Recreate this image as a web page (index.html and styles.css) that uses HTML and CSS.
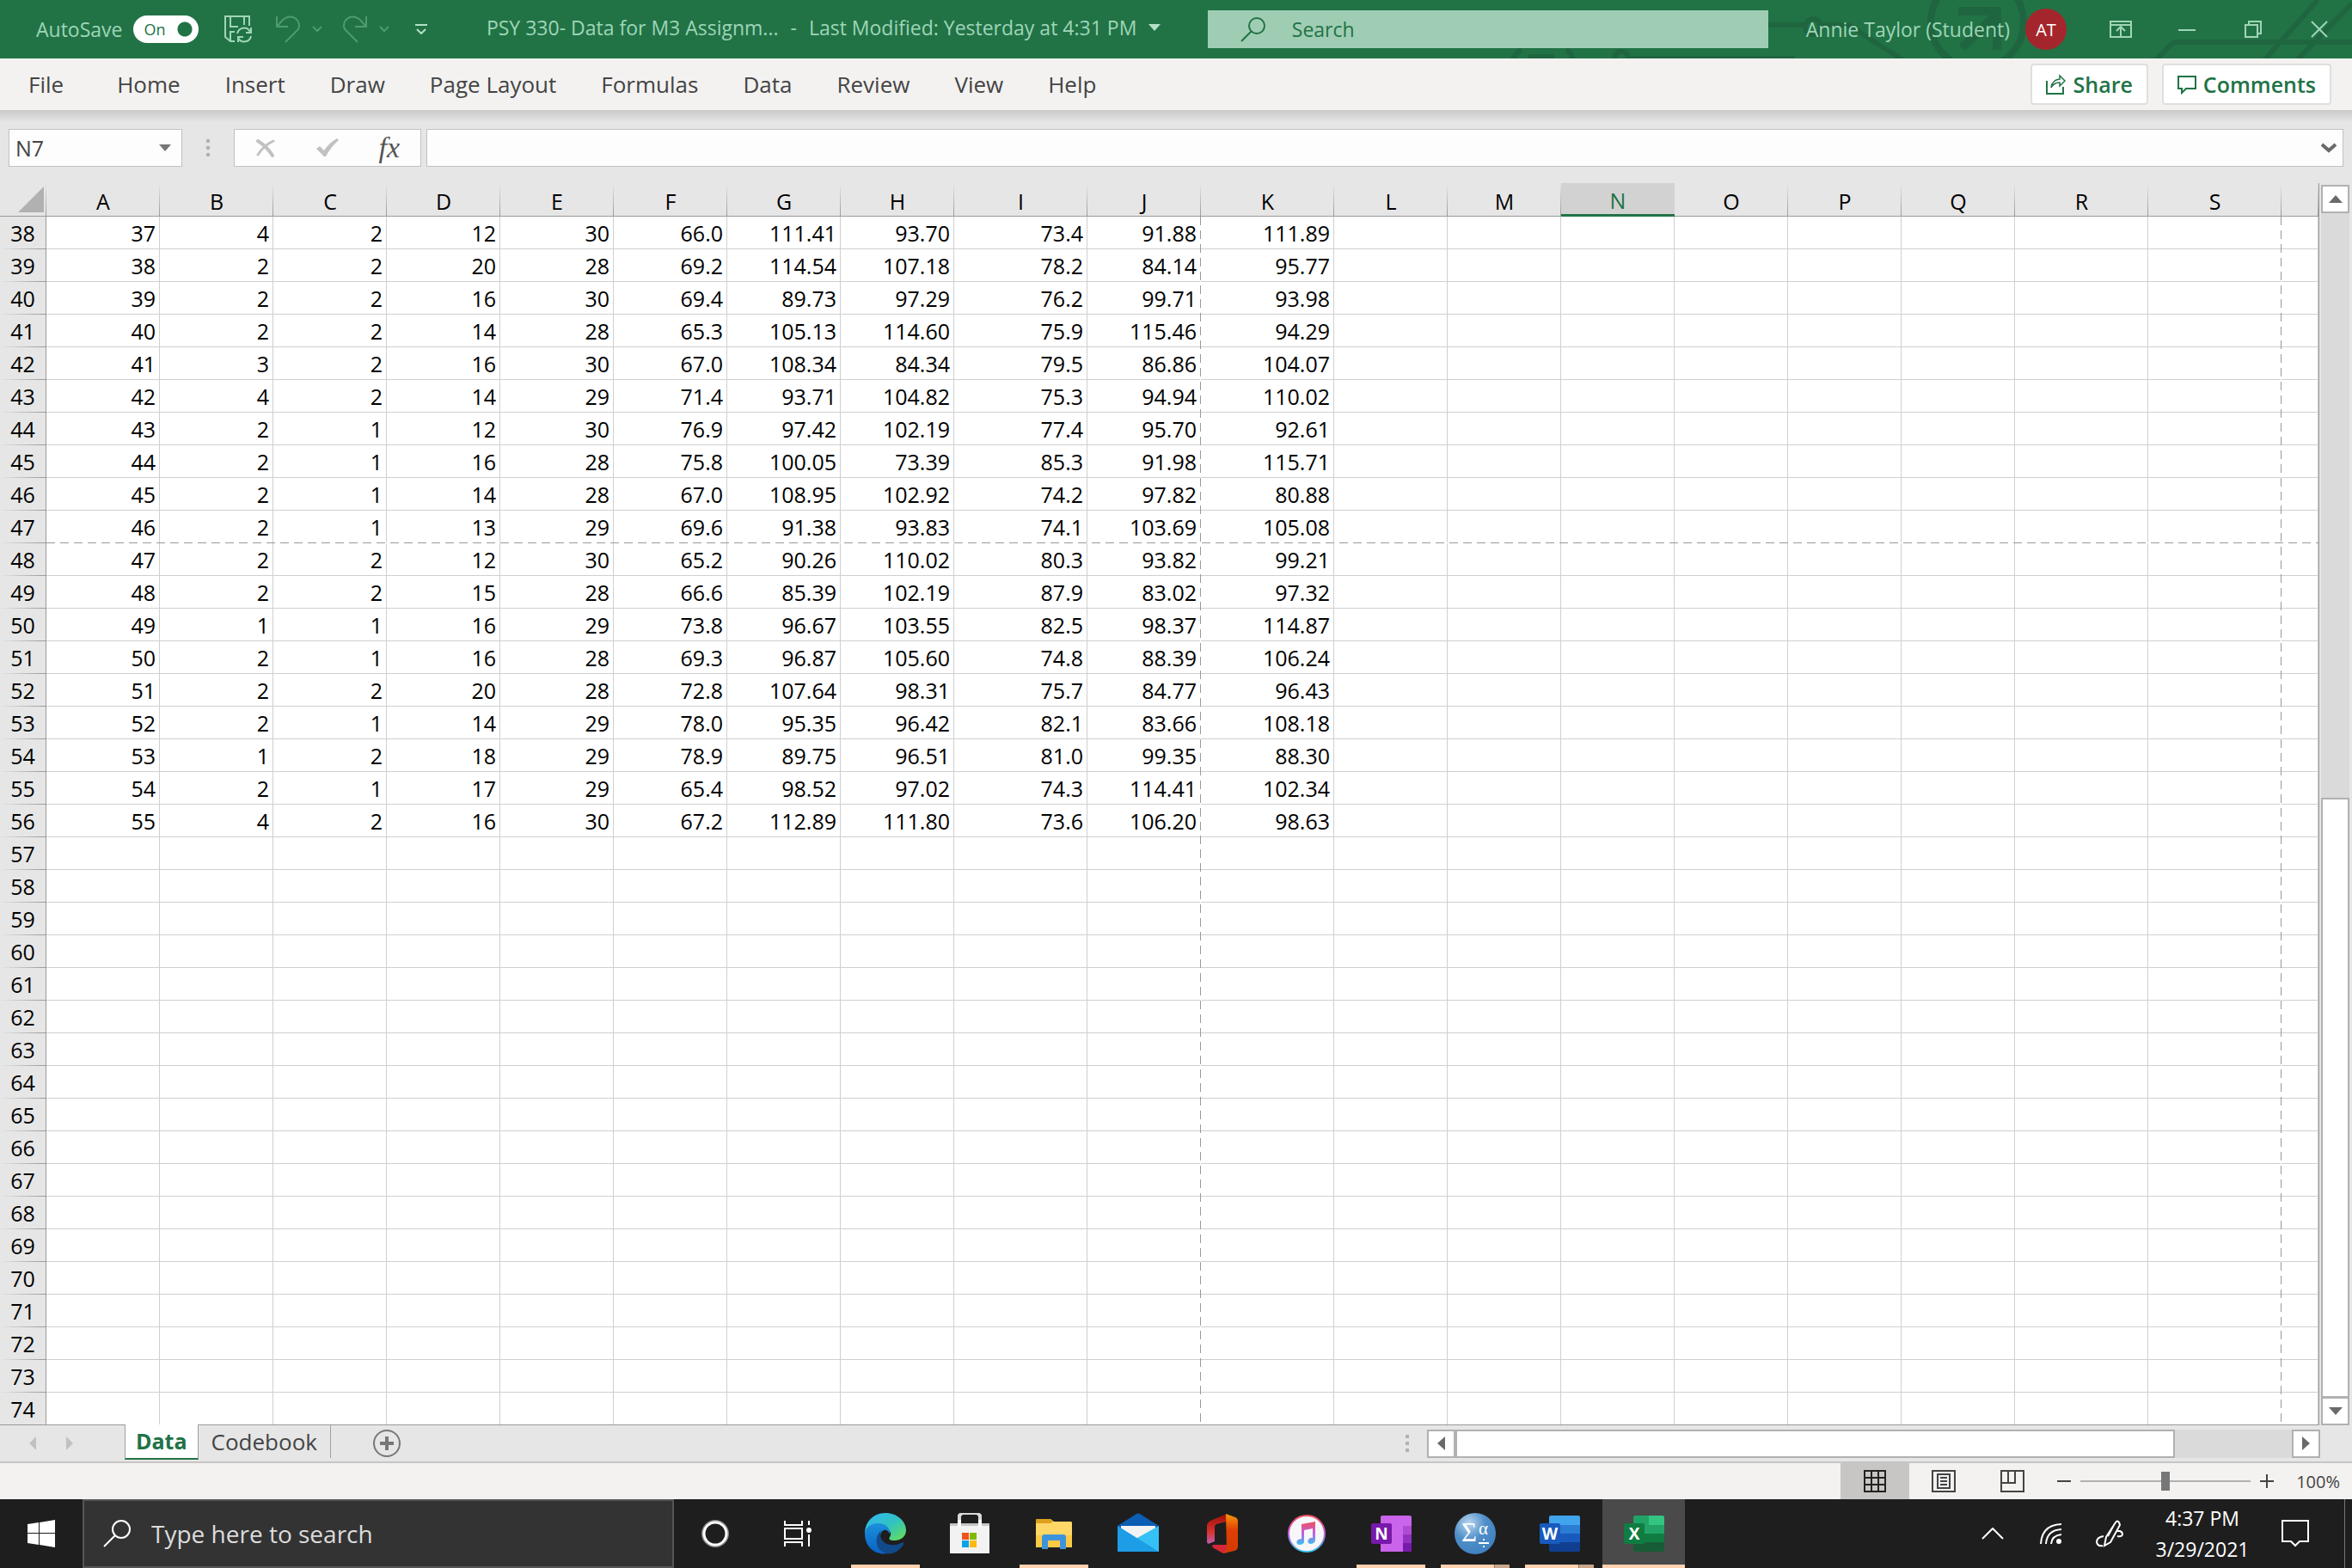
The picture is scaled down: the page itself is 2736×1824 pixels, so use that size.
FILE: index.html
```html
<!DOCTYPE html>
<html lang="en">
<head>
    <meta charset="UTF-8">
    <meta name="viewport" content="width=device-width, initial-scale=1.0">
    <title>PSY 330- Data for M3 Assignment - Excel</title>
    <link rel="stylesheet" href="styles.css">
</head>
<body>
    <header class="titlebar">
        <svg class="titlebar-art" width="1000" height="68" viewBox="0 0 1000 68" fill="none" stroke="#1f6640" stroke-width="6">
            <circle cx="564" cy="26" r="54" stroke-width="8"/>
            <path d="M542 13H587V58M587 16L546 56" stroke-width="10"/>
            <path d="M320 29H362M384 29H410Q420 30 428 38L478 70"/>
            <circle cx="373" cy="31" r="9"/>
            <path d="M24 70Q26 62 34 58M86 58Q92 62 94 70M42 66H72M142 70Q142 60 150 60Q158 60 158 70M158 68H352"/>
            <path d="M772 70L790 51Q793 49 797 49H1000M898 70L960 0M936 70L1000 4"/>
        </svg>
        <div class="quick-access">
            <label class="autosave" for="autosave">AutoSave</label>
            <span class="toggle">
                <input type="checkbox" id="autosave" checked>
                <span class="toggle-text">On</span>
            </span>
            <button class="icon-btn save-btn" aria-label="Save">
                <svg width="32" height="32" viewBox="0 0 32 32" fill="none" stroke="#9fd5b7" stroke-width="2">
                    <path d="M12 30H7L1 25V1H29V12M7 1V13H16M23 1V11M7 30V19H12M16 31V25H22M31 14V20H25"/>
                    <path d="M15 21A8 8 0 0 1 30 19M31 24A8 8 0 0 1 16 26"/>
                </svg>
            </button>
            <button class="icon-btn undo-btn" aria-label="Undo">
                <svg width="28" height="32" viewBox="0 0 28 32" fill="none" stroke="#4f9a70" stroke-width="2"><path d="M1 1V13H14M2 12L8 5Q14 0 20 2Q27 5 27 12Q27 16 23 19L11 31"/></svg>
            </button>
            <button class="icon-btn" aria-label="Undo list">
                <svg width="12" height="8" viewBox="0 0 12 8" fill="none" stroke="#4f9a70" stroke-width="2"><path d="M1 1L6 6L11 1"/></svg>
            </button>
            <button class="icon-btn redo-btn" aria-label="Redo">
                <svg width="28" height="32" viewBox="0 0 28 32" fill="none" stroke="#4f9a70" stroke-width="2"><path d="M27 1V13H14M26 12L20 5Q14 0 8 2Q1 5 1 12Q1 16 5 19L17 31"/></svg>
            </button>
            <button class="icon-btn" aria-label="Redo list">
                <svg width="12" height="8" viewBox="0 0 12 8" fill="none" stroke="#4f9a70" stroke-width="2"><path d="M1 1L6 6L11 1"/></svg>
            </button>
            <button class="icon-btn customize-btn" aria-label="Customize Quick Access Toolbar">
                <svg width="14" height="12" viewBox="0 0 14 12" fill="none" stroke="#b5e0c8" stroke-width="2"><path d="M0 1H14M2 6L7 11L12 6"/></svg>
            </button>
        </div>
        <button class="doc-title">
            <span>PSY 330- Data for M3 Assignm...</span>
            <span>-</span>
            <span>Last Modified: Yesterday at 4:31 PM</span>
            <svg width="14" height="8" viewBox="0 0 14 8"><path d="M0 0H14L7 8Z" fill="#b5e0c8"/></svg>
        </button>
        <div class="title-search">
            <svg width="30" height="30" viewBox="0 0 30 30" fill="none" stroke="#217346" stroke-width="2"><circle cx="19" cy="11" r="9"/><path d="M13 17L1 29"/></svg>
            <input type="search" placeholder="Search" aria-label="Search">
        </div>
        <div class="account">
            <span>Annie Taylor (Student)</span>
            <button class="avatar">AT</button>
        </div>
        <div class="window-buttons">
            <button aria-label="Ribbon Display Options">
                <svg width="26" height="20" viewBox="0 0 26 20" fill="none" stroke="#9fd5b7" stroke-width="2"><path d="M1 1H25V19H1ZM1 5H25M13 19V8M8 12L13 7L18 12"/></svg>
            </button>
            <button aria-label="Minimize">
                <svg width="20" height="20" viewBox="0 0 20 20" fill="none" stroke="#9fd5b7" stroke-width="2"><path d="M0 11H20"/></svg>
            </button>
            <button aria-label="Restore">
                <svg width="20" height="20" viewBox="0 0 20 20" fill="none" stroke="#9fd5b7" stroke-width="2"><path d="M1 5H15V19H1ZM5 5V1H19V15H15"/></svg>
            </button>
            <button aria-label="Close">
                <svg width="20" height="20" viewBox="0 0 20 20" fill="none" stroke="#9fd5b7" stroke-width="2"><path d="M1 1L19 19M19 1L1 19"/></svg>
            </button>
        </div>
    </header>

    <nav class="ribbon">
        <div class="ribbon-tabs">
            <button class="file-tab">File</button>
            <button>Home</button>
            <button>Insert</button>
            <button>Draw</button>
            <button>Page Layout</button>
            <button>Formulas</button>
            <button>Data</button>
            <button>Review</button>
            <button>View</button>
            <button>Help</button>
        </div>
        <button class="action-btn">
            <svg width="24" height="24" viewBox="0 0 24 24" fill="none" stroke="#217346" stroke-width="2"><path d="M1 8V23H20V15"/><path d="M6 16Q7 7 16 6V2L22 8L16 14V10Q9 10 6 16Z" stroke-width="1.5"/></svg>
            Share
        </button>
        <button class="action-btn comments-btn">
            <svg width="22" height="24" viewBox="0 0 22 24" fill="none" stroke="#217346" stroke-width="2"><path d="M1 3H21V17H10L5 22V17H1Z"/></svg>
            Comments
        </button>
    </nav>

    <div class="formula-row">
        <div class="name-box">
            <input type="text" value="N7" aria-label="Name box">
            <button aria-label="Name list"><svg width="14" height="8" viewBox="0 0 14 8"><path d="M0 0H14L7 8Z" fill="#777"/></svg></button>
        </div>
        <span class="grip"></span>
        <div class="formula-buttons">
            <button aria-label="Cancel"><svg width="24" height="22" viewBox="0 0 24 22" fill="none" stroke="#c1c1c1" stroke-linecap="round"><path d="M3 3Q13 9 20 20" stroke-width="4"/><path d="M21 3Q10 8 3 19" stroke-width="3"/></svg></button>
            <button aria-label="Enter"><svg width="26" height="22" viewBox="0 0 26 22"><path d="M0 12L4 9L9 14Q15 5 24 0L26 2Q16 11 11 21H9Z" fill="#c1c1c1"/></svg></button>
            <button class="fx-btn" aria-label="Insert function"><i>fx</i></button>
        </div>
        <div class="formula-box">
            <input type="text" aria-label="Formula bar">
            <button aria-label="Expand formula bar"><svg width="20" height="12" viewBox="0 0 20 12" fill="none" stroke="#6a6a6a" stroke-width="4"><path d="M2 2L10 9L18 2"/></svg></button>
        </div>
    </div>

    <main class="workspace">
        <div class="sheet">
            <table class="grid">
                <colgroup id="cols"></colgroup>
                <thead><tr id="letters"></tr></thead>
                <tbody id="rows"></tbody>
            </table>
            <div class="page-break break-j"></div>
            <div class="page-break break-s"></div>
            <div class="page-break break-row"></div>
        </div>
        <div class="v-scroll">
            <button aria-label="Scroll up"><svg width="16" height="9" viewBox="0 0 16 9"><path d="M8 0L16 9H0Z" fill="#6a6a6a"/></svg></button>
            <div class="v-track"><div class="v-thumb"></div></div>
            <button aria-label="Scroll down"><svg width="16" height="9" viewBox="0 0 16 9"><path d="M8 9L16 0H0Z" fill="#6a6a6a"/></svg></button>
        </div>
    </main>

    <div class="sheet-bar">
        <button class="sheet-nav" aria-label="Previous sheet"><svg width="8" height="16" viewBox="0 0 8 16"><path d="M8 0V16L0 8Z" fill="#c1c1c1"/></svg></button>
        <button class="sheet-nav" aria-label="Next sheet"><svg width="8" height="16" viewBox="0 0 8 16"><path d="M0 0V16L8 8Z" fill="#c1c1c1"/></svg></button>
        <button class="sheet-tab active">Data</button>
        <button class="sheet-tab">Codebook</button>
        <button class="add-sheet" aria-label="New sheet"><svg width="32" height="32" viewBox="0 0 32 32" fill="none" stroke="#777"><circle cx="16" cy="16" r="15" stroke-width="2"/><path d="M16 8V24M8 16H24" stroke-width="4"/></svg></button>
        <span class="grip"></span>
        <div class="h-scroll">
            <button aria-label="Scroll left"><svg width="9" height="16" viewBox="0 0 9 16"><path d="M9 0V16L0 8Z" fill="#6a6a6a"/></svg></button>
            <div class="h-track"><div class="h-thumb"></div></div>
            <button aria-label="Scroll right"><svg width="9" height="16" viewBox="0 0 9 16"><path d="M0 0V16L9 8Z" fill="#6a6a6a"/></svg></button>
        </div>
    </div>

    <footer class="status-bar">
        <button class="view-btn active" aria-label="Normal view"><svg width="26" height="26" viewBox="0 0 26 26" fill="none" stroke="#222" stroke-width="2"><path d="M1 1H25V25H1ZM9 1V25M17 1V25M1 9H25M1 17H25"/></svg></button>
        <button class="view-btn" aria-label="Page Layout view"><svg width="28" height="26" viewBox="0 0 28 26" fill="none" stroke="#444" stroke-width="2"><path d="M1 1H27V25H1ZM7 5H21V21H7ZM10 9H18M10 13H18M10 17H18"/></svg></button>
        <button class="view-btn" aria-label="Page Break Preview"><svg width="28" height="26" viewBox="0 0 28 26" fill="none" stroke="#444" stroke-width="2"><path d="M1 1H27V25H1ZM9 1V15M17 1V15H1"/></svg></button>
        <button class="zoom-btn" aria-label="Zoom out"><svg width="16" height="16" viewBox="0 0 16 16" stroke="#444" stroke-width="2"><path d="M0 8H16"/></svg></button>
        <input class="zoom-range" type="range" min="0" max="100" value="50" aria-label="Zoom">
        <button class="zoom-btn" aria-label="Zoom in"><svg width="16" height="16" viewBox="0 0 16 16" stroke="#444" stroke-width="2"><path d="M0 8H16M8 0V16"/></svg></button>
        <button class="zoom-level">100%</button>
    </footer>

    <div class="taskbar">
        <button class="start" aria-label="Start"><svg width="32" height="32" viewBox="0 0 32 32" fill="#fff"><path d="M0 5L13 3V15H0ZM14 3L32 0V15H14ZM0 16H13V29L0 27ZM14 16H32V32L14 29Z"/></svg></button>
        <div class="task-search">
            <svg width="32" height="32" viewBox="0 0 32 32" fill="none" stroke="#fff" stroke-width="2"><circle cx="21" cy="11" r="10"/><path d="M14 18L1 31"/></svg>
            <input type="search" placeholder="Type here to search" aria-label="Type here to search">
        </div>
        <button class="task-btn" aria-label="Cortana"><svg width="32" height="32" viewBox="0 0 32 32" fill="none"><circle cx="16" cy="16" r="15" stroke="#8a8a8a" stroke-width="2"/><circle cx="16" cy="16" r="13" stroke="#fff" stroke-width="3"/></svg></button>
        <button class="task-btn task-view" aria-label="Task View"><svg width="32" height="30" viewBox="0 0 32 30" fill="none" stroke="#fff" stroke-width="2"><path d="M1 0V5H21V0M1 30V25H21V30M1 9H21V21H1ZM29 0V5M29 16V30"/><circle cx="29" cy="11" r="3" fill="#fff" stroke="none"/></svg></button>
        <div class="task-apps">
            <button class="task-btn running" aria-label="Microsoft Edge">
                <svg width="48" height="48" viewBox="0 0 48 48">
                    <defs>
                        <linearGradient id="edgeTop" x1="0" y1="0" x2="1" y2="1"><stop offset="0" stop-color="#35b5f3"/><stop offset=".5" stop-color="#2fc2c4"/><stop offset="1" stop-color="#6ae04f"/></linearGradient>
                        <linearGradient id="edgeLow" x1="0" y1="0" x2="0" y2="1"><stop offset="0" stop-color="#1b8fdc"/><stop offset="1" stop-color="#0a62c4"/></linearGradient>
                    </defs>
                    <path d="M0 24C0 9 11 0 24 0C38 0 48 10 48 20C48 28 41 32 35 32C30 32 27 31 29 28C32 24 29 18 23 18L0 24Z" fill="url(#edgeTop)"/>
                    <path d="M0 24C1 16 8 12 15 12C24 12 30 17 29 25C28 20 22 17 19 23C15 31 22 43 33 43C28 48 22 48 18 47C7 45 0 36 0 24Z" fill="url(#edgeLow)"/>
                    <path d="M19 20C16 29 21 36 30 37C36 38 40 36 44 34Q46 35 44 38C39 45 32 49 25 47C15 45 8 32 19 20Z" fill="#114a8b"/>
                </svg>
            </button>
            <button class="task-btn" aria-label="Microsoft Store">
                <svg width="48" height="48" viewBox="0 0 48 48"><path d="M12 14V3L15 0H33L36 3V14" fill="none" stroke="#d9d9d9" stroke-width="4"/><path d="M1 12H47V47H1Z" fill="#f2f2f2"/><path d="M1 12H47V15H1Z" fill="#c4c4c4"/><path d="M10 8H14V16H10ZM34 8H38V16H34Z" fill="#fafafa"/><path d="M15 23H23V31H15Z" fill="#f1511b"/><path d="M24 23H32V31H24Z" fill="#80b900"/><path d="M15 32H23V40H15Z" fill="#0aa3e8"/><path d="M24 32H32V40H24Z" fill="#fdba09"/></svg>
            </button>
            <button class="task-btn running" aria-label="File Explorer">
                <svg width="48" height="48" viewBox="0 0 48 48"><path d="M3 9Q3 7 5 7H20L24 10H44Q45 10 45 12V40H3Z" fill="#ffd767"/><path d="M3 8Q3 7 5 7H20L23 10L20 12H3Z" fill="#dda11c"/><path d="M3 26H45V39Q45 40 43 40H5Q3 40 3 38Z" fill="#fbca45"/><path d="M10 42V28Q10 25 13 25H35Q38 25 38 28V42H31V32H17V42Z" fill="#3e94dc"/></svg>
            </button>
            <button class="task-btn" aria-label="Mail">
                <svg width="48" height="48" viewBox="0 0 48 48"><path d="M0 15L22 1Q24 0 26 1L48 15V24H0Z" fill="#0b5eb4"/><path d="M4 15H44V30H4Z" fill="#f3f3f3"/><path d="M48 15V45H24L14 34Z" fill="#36c1f6"/><path d="M0 15L48 45H0Z" fill="#1c9de6"/></svg>
            </button>
            <button class="task-btn" aria-label="Office">
                <svg width="48" height="48" viewBox="0 0 48 48"><defs><linearGradient id="officeSide" x1="0" y1="0" x2="0" y2="1"><stop offset="0" stop-color="#9c0f0a"/><stop offset=".6" stop-color="#d8322c"/><stop offset="1" stop-color="#bf5fb0"/></linearGradient><linearGradient id="officeFront" x1="0" y1="0" x2="0" y2="1"><stop offset="0" stop-color="#f59a0c"/><stop offset=".4" stop-color="#e03f05"/><stop offset="1" stop-color="#d43a02"/></linearGradient></defs><path d="M29 1L10 9Q6 11 6 15V33Q6 37 10 35L15 33V16Q15 14 17 13L29 10Z" fill="url(#officeSide)"/><path d="M29 37H13Q11 39 14 41L25 47L29 46Z" fill="#d62739"/><path d="M28 1L39 5Q42 6 42 10V39Q42 43 38 44L25 47L29 42Z" fill="url(#officeFront)"/></svg>
            </button>
            <button class="task-btn" aria-label="iTunes">
                <svg width="48" height="48" viewBox="0 0 48 48"><defs><linearGradient id="tunes" x1="0" y1="0" x2="0" y2="1"><stop offset="0" stop-color="#f0505c"/><stop offset=".5" stop-color="#c05fe0"/><stop offset="1" stop-color="#35c3ef"/></linearGradient></defs><circle cx="24" cy="24" r="21" fill="#f7f7fa" stroke="url(#tunes)" stroke-width="2"/><path d="M18 13L34 10V32Q33 36 28 36Q24 35 26 31Q28 28 31 29V18L21 20V34Q20 37 15 37Q11 36 13 32Q15 30 18 30Z" fill="url(#tunes)"/></svg>
            </button>
            <button class="task-btn running" aria-label="OneNote">
                <svg width="48" height="48" viewBox="0 0 48 48"><path d="M12 5Q12 3 14 3H46Q48 3 48 5V45H12Z" fill="#ca64ea"/><path d="M38 15H48V25H38Z" fill="#ae4bd5"/><path d="M38 25H48V35H38Z" fill="#9332bf"/><path d="M38 35H48V45H38Z" fill="#7719aa"/><rect x="1" y="12" width="24" height="24" rx="2" fill="#7719aa"/><text x="13" y="31" class="app-letter">N</text></svg>
            </button>
            <button class="task-btn running stacked" aria-label="SPSS Statistics">
                <svg width="48" height="48" viewBox="0 0 48 48"><defs><radialGradient id="spss" cx=".35" cy=".25" r=".8"><stop offset="0" stop-color="#b8d6ee"/><stop offset=".5" stop-color="#4f8fc8"/><stop offset="1" stop-color="#3f80c0"/></radialGradient></defs><circle cx="24" cy="24" r="24" fill="url(#spss)"/><text x="8" y="33" font-family="Liberation Serif, serif" font-size="31" fill="#fff">Σ</text><text x="28" y="25" font-family="Liberation Serif, serif" font-size="21" fill="#fff">α</text><path d="M28 35H40M34 30V32M34 38V40" stroke="#fff" stroke-width="2"/></svg>
            </button>
            <button class="task-btn running stacked" aria-label="Word">
                <svg width="48" height="48" viewBox="0 0 48 48"><path d="M12 5Q12 3 14 3H46Q48 3 48 5V14H12Z" fill="#41a5ee"/><path d="M12 14H48V24H12Z" fill="#2b7cd3"/><path d="M12 24H48V34H12Z" fill="#185abd"/><path d="M12 34H48V43Q48 45 46 45H14Q12 45 12 43Z" fill="#103f91"/><rect x="1" y="12" width="24" height="24" rx="2" fill="#185abd"/><text x="13" y="31" class="app-letter">W</text></svg>
            </button>
            <button class="task-btn current" aria-label="Excel">
                <svg width="48" height="48" viewBox="0 0 48 48"><path d="M12 5Q12 3 14 3H30V45H14Q12 45 12 43Z" fill="#21a366"/><path d="M30 3H46Q48 3 48 5V14H30Z" fill="#33c481"/><path d="M30 14H48V24H30Z" fill="#21a366"/><path d="M12 24H48V34H12Z" fill="#107c41"/><path d="M12 34H48V43Q48 45 46 45H14Q12 45 12 43Z" fill="#185c37"/><rect x="1" y="12" width="24" height="24" rx="2" fill="#107c41"/><text x="13" y="31" class="app-letter">X</text></svg>
            </button>
        </div>
        <div class="tray">
            <button aria-label="Show hidden icons"><svg width="26" height="14" viewBox="0 0 26 14" fill="none" stroke="#fff" stroke-width="2"><path d="M1 13L13 1L25 13"/></svg></button>
            <button aria-label="Network"><svg width="26" height="26" viewBox="0 0 26 26" fill="none" stroke="#fff" stroke-width="2"><path d="M1 25Q2 3 25 2M7 25Q8 9 25 8M13 25Q14 15 25 14"/><circle cx="22" cy="22" r="3" fill="#fff" stroke="none"/></svg></button>
            <button aria-label="Windows Ink"><svg width="32" height="32" viewBox="0 0 32 32" fill="none" stroke="#fff" stroke-width="2"><path d="M10 30L12 20L23 3Q25 0 27 3L28 6L17 26ZM14 19L21 6M9 19Q1 20 1 26Q2 31 8 30M24 13H28Q31 14 31 17Q30 20 25 19"/></svg></button>
            <button class="clock"><span>4:37 PM</span><span>3/29/2021</span></button>
            <button aria-label="Notifications"><svg width="32" height="32" viewBox="0 0 32 32" fill="none" stroke="#fff" stroke-width="2"><path d="M1 1H31V25H21L16 30L11 25H1Z"/></svg></button>
            <button class="show-desktop" aria-label="Show desktop"></button>
        </div>
    </div>

    <script src="script.js"></script>
</body>
</html>
```

FILE: styles.css
```css
* {
    box-sizing: border-box;
}
body {
    margin: 0;
    height: 100vh;
    display: flex;
    flex-direction: column;
    overflow: hidden;
    font-family: "Open Sans", "Noto Sans", sans-serif;
    font-size: 25px;
    background: #e6e6e6;
    color: #444;
}
button, input {
    font: inherit;
    color: inherit;
    background: none;
    border: none;
    padding: 0;
    margin: 0;
    outline: none;
}
button {
    display: flex;
    align-items: center;
    justify-content: center;
    white-space: nowrap;
}
svg {
    flex: none;
}

/* Title bar */
.titlebar {
    position: relative;
    flex: none;
    height: 68px;
    display: flex;
    align-items: center;
    background: #217346;
    color: #9fd5b7;
    font-size: 23px;
}
.titlebar > * {
    position: relative;
}
.titlebar .titlebar-art {
    position: absolute;
    right: 0;
    top: 0;
}
.quick-access {
    display: flex;
    align-items: center;
    padding-left: 42px;
}
.autosave {
    margin-right: 13px;
}
.toggle {
    position: relative;
    display: flex;
    align-items: center;
}
.toggle input {
    appearance: none;
    width: 76px;
    height: 32px;
    border-radius: 16px;
    background: radial-gradient(circle 8px at 60px 16px, #217346 8px, #fff 9px);
}
.toggle-text {
    position: absolute;
    left: 12px;
    font-size: 18px;
    color: #217346;
    pointer-events: none;
}
.save-btn {
    margin-left: 30px;
}
.undo-btn {
    margin: 0 14px 0 28px;
}
.redo-btn {
    margin: 0 14px 0 24px;
}
.customize-btn {
    margin-left: 30px;
}
.doc-title {
    flex: 1;
    gap: 14px;
    padding: 0 0 4px 14px;
}
.title-search {
    flex: 0 1 652px;
    height: 44px;
    display: flex;
    align-items: center;
    gap: 30px;
    padding: 0 38px;
    background: #9fcdb3;
    color: #217346;
}
.title-search input {
    flex: 1;
    min-width: 0;
}
input::placeholder {
    color: inherit;
    opacity: 1;
}
.account {
    display: flex;
    align-items: center;
    gap: 18px;
    padding: 0 24px 0 44px;
}
.avatar {
    width: 48px;
    height: 48px;
    border-radius: 50%;
    background: #a4262c;
    color: #fff;
    font-size: 20px;
}
.window-buttons {
    display: flex;
}
.window-buttons button {
    width: 77px;
    height: 68px;
}

/* Ribbon */
.ribbon {
    flex: none;
    height: 60px;
    display: flex;
    align-items: center;
    gap: 16px;
    padding-right: 24px;
    background: #f3f2f1;
}
.ribbon-tabs {
    flex: 1;
    display: flex;
    padding-left: 7px;
}
.ribbon-tabs button {
    padding: 0 26px;
    font-size: 26px;
}
.ribbon-tabs .file-tab {
    padding-right: 36px;
}
.action-btn {
    height: 48px;
    gap: 8px;
    padding: 0 16px;
    border: 2px solid #e1dfdd;
    border-radius: 4px;
    background: #fff;
    color: #217346;
    font-weight: 600;
}

/* Formula bar */
.formula-row {
    flex: none;
    display: flex;
    align-items: center;
    padding: 22px 10px 19px;
    background: linear-gradient(#c9c9c9, #e6e6e6 14px);
}
.name-box, .formula-buttons, .formula-box {
    height: 44px;
    display: flex;
    align-items: center;
    border: 1px solid #c1c1c1;
    background: #fdfdfd;
}
.name-box {
    width: 202px;
    padding: 0 12px 0 7px;
}
.name-box input, .formula-box input {
    flex: 1;
    min-width: 0;
}
.grip {
    width: 4px;
    height: 20px;
    background: repeating-linear-gradient(#b1b1b1 0 4px, transparent 4px 8px);
}
.formula-row .grip {
    margin: 0 28px;
}
.formula-buttons {
    width: 218px;
    justify-content: space-between;
    padding: 0 24px;
    margin-right: 6px;
}
.fx-btn {
    font-family: "Liberation Serif", serif;
    font-size: 34px;
    line-height: 40px;
    color: #555;
}
.formula-box {
    flex: 1;
    padding: 0 6px;
}

/* Sheet */
.workspace {
    flex: 1;
    min-height: 0;
    display: flex;
}
.sheet {
    position: relative;
    flex: 1;
    min-width: 0;
    overflow: hidden;
    border-right: 1px solid #999;
    border-bottom: 1px solid #999;
    background: #fff;
}
.grid {
    width: 100%;
    table-layout: fixed;
    border-collapse: separate;
    border-spacing: 0;
    font-size: 25px;
    line-height: 34px;
    color: #000;
}
.grid th, .grid td {
    height: 38px;
    padding: 0;
    font-weight: normal;
    overflow: hidden;
}
.grid td {
    padding: 0 4px 0 0;
    border-right: 1px solid #d0d0d0;
    border-bottom: 1px solid #d0d0d0;
    text-align: right;
}
.grid thead th {
    height: 39px;
    padding-top: 4px;
    border-bottom: 1px solid #999;
    background: linear-gradient(#e6e6e6, #999) right / 1px 100% no-repeat #e6e6e6;
}
.grid tbody th {
    border-right: 1px solid #999;
    background: linear-gradient(90deg, #e6e6e6, #999) bottom / 100% 1px no-repeat #e6e6e6;
}
.grid thead .col-selected {
    line-height: 32px;
    border-bottom: 3px solid #217346;
    background: #d2d2d2;
    color: #217346;
}
.grid .corner {
    padding: 0 3px 0 0;
}
.corner svg {
    display: block;
    margin-left: auto;
}
.page-break {
    position: absolute;
}
.break-j, .break-s {
    top: 39px;
    bottom: 0;
    width: 1px;
    background: repeating-linear-gradient(#999 0 10px, #fff 10px 16px);
}
.break-j {
    left: 1396px;
}
.break-s {
    left: 2653px;
}
.break-row {
    left: 54px;
    right: 0;
    top: 418px;
    height: 1px;
    background: repeating-linear-gradient(90deg, #999 0 10px, #fff 10px 16px);
}
.v-scroll {
    flex: none;
    width: 38px;
    display: flex;
    flex-direction: column;
    padding: 2px 3px 0 2px;
}
.v-scroll button, .h-scroll button {
    flex: none;
    width: 33px;
    height: 33px;
    border: 2px solid #b1b1b1;
    background: #fff;
}
.v-track {
    flex: 1;
    display: flex;
    align-items: flex-end;
    background: #dadada;
}
.v-thumb {
    width: 100%;
    height: 50.6%;
    border: 2px solid #b1b1b1;
    border-bottom-width: 1px;
    background: #fff;
}

/* Sheet tabs */
.sheet-bar {
    flex: none;
    height: 44px;
    display: flex;
    align-items: center;
    padding: 0 37px 0 34px;
    border-bottom: 2px solid #c8c6c4;
}
.sheet-nav {
    width: 8px;
    margin-right: 35px;
}
.sheet-nav + .sheet-nav {
    margin-right: 60px;
}
.sheet-tab {
    align-self: flex-start;
    height: 38px;
    padding: 0 15px;
    border-right: 1px solid #a0a0a0;
    font-size: 26px;
}
.sheet-tab.active {
    height: 41px;
    margin-top: -1px;
    padding: 0 12px 2px;
    border-left: 1px solid #a0a0a0;
    border-bottom: 2px solid #217346;
    background: #fff;
    color: #217346;
    font-size: 25px;
    font-weight: bold;
    position: relative;
}
.add-sheet {
    margin-left: 49px;
}
.sheet-bar .grip {
    margin: 0 21px 0 auto;
}
.h-scroll {
    flex: 0 0 39%;
    display: flex;
}
.h-track {
    flex: 1;
    background: #dadada;
}
.h-thumb {
    width: 86%;
    height: 33px;
    border: 2px solid #b1b1b1;
    background: #fff;
}

/* Status bar */
.status-bar {
    flex: none;
    height: 42px;
    display: flex;
    align-items: center;
    justify-content: flex-end;
    padding-right: 14px;
    background: #f3f2f1;
}
.view-btn {
    width: 80px;
    height: 42px;
}
.view-btn.active {
    background: #c8c6c4;
}
.zoom-btn {
    margin: 0 11px;
}
.view-btn + .zoom-btn {
    margin-left: 12px;
}
.zoom-range {
    appearance: none;
    width: 198px;
    height: 22px;
    background: linear-gradient(#b1b1b1, #b1b1b1) center / 100% 2px no-repeat;
}
.zoom-range::-webkit-slider-thumb {
    appearance: none;
    width: 10px;
    height: 22px;
    background: #777;
}
.zoom-level {
    width: 66px;
    justify-content: flex-end;
    font-size: 20px;
}

/* Taskbar */
.taskbar {
    flex: none;
    height: 80px;
    display: flex;
    background: #1e1e1e;
    color: #fff;
}
.start {
    width: 96px;
}
.task-search {
    flex: 0 1 688px;
    display: flex;
    align-items: center;
    gap: 24px;
    padding: 0 22px;
    border: 2px solid #555;
    background: #333;
    color: #dcdcdc;
    font-size: 28px;
}
.task-search input {
    flex: 1;
    min-width: 0;
}
.task-btn {
    position: relative;
    width: 96px;
    height: 80px;
}
.task-view {
    margin-right: 6px;
}
.task-apps {
    display: flex;
    gap: 2px;
}
.running::after, .current::after {
    content: "";
    position: absolute;
    left: 8px;
    right: 8px;
    bottom: 0;
    height: 4px;
    background: #ffd1ae;
}
.stacked::after {
    background: linear-gradient(90deg, #ffd1ae 62px, #8e7562 62px 63px, #cba78c 63px);
}
.current {
    background: #4a4a4a;
}
.current::after {
    left: 0;
    right: 0;
}
.app-letter {
    font-family: "Open Sans", sans-serif;
    font-size: 19px;
    font-weight: bold;
    text-anchor: middle;
    fill: #fff;
}
.tray {
    display: flex;
    align-items: stretch;
    margin-left: auto;
}
.tray button {
    width: 68px;
}
.tray .clock {
    width: 148px;
    flex-direction: column;
    font-size: 23px;
    line-height: 36px;
}
.tray .clock + button {
    width: 68px;
    margin-right: 23px;
}
.tray .show-desktop {
    width: 9px;
    border-left: 1px solid #777;
}
```

FILE: script.js
```js
// Column widths in pixels, the last column takes what is left
const columns = [
    ['A', 132], ['B', 132], ['C', 132], ['D', 132], ['E', 132], ['F', 132], ['G', 132], ['H', 132],
    ['I', 155], ['J', 132], ['K', 155], ['L', 132], ['M', 132], ['N', 132], ['O', 132], ['P', 132],
    ['Q', 132], ['R', 155], ['S', 155], ['', 0]
];

const firstRow = 38;
const lastRow = 74;

const data = [
    '37 4 2 12 30 66.0 111.41 93.70 73.4 91.88 111.89',
    '38 2 2 20 28 69.2 114.54 107.18 78.2 84.14 95.77',
    '39 2 2 16 30 69.4 89.73 97.29 76.2 99.71 93.98',
    '40 2 2 14 28 65.3 105.13 114.60 75.9 115.46 94.29',
    '41 3 2 16 30 67.0 108.34 84.34 79.5 86.86 104.07',
    '42 4 2 14 29 71.4 93.71 104.82 75.3 94.94 110.02',
    '43 2 1 12 30 76.9 97.42 102.19 77.4 95.70 92.61',
    '44 2 1 16 28 75.8 100.05 73.39 85.3 91.98 115.71',
    '45 2 1 14 28 67.0 108.95 102.92 74.2 97.82 80.88',
    '46 2 1 13 29 69.6 91.38 93.83 74.1 103.69 105.08',
    '47 2 2 12 30 65.2 90.26 110.02 80.3 93.82 99.21',
    '48 2 2 15 28 66.6 85.39 102.19 87.9 83.02 97.32',
    '49 1 1 16 29 73.8 96.67 103.55 82.5 98.37 114.87',
    '50 2 1 16 28 69.3 96.87 105.60 74.8 88.39 106.24',
    '51 2 2 20 28 72.8 107.64 98.31 75.7 84.77 96.43',
    '52 2 1 14 29 78.0 95.35 96.42 82.1 83.66 108.18',
    '53 1 2 18 29 78.9 89.75 96.51 81.0 99.35 88.30',
    '54 2 1 17 29 65.4 98.52 97.02 74.3 114.41 102.34',
    '55 4 2 16 30 67.2 112.89 111.80 73.6 106.20 98.63'
].map(line => line.split(' '));

document.getElementById('cols').innerHTML = '<col style="width: 54px">' +
    columns.map(([, width]) => width ? `<col style="width: ${width}px">` : '<col>').join('');

document.getElementById('letters').innerHTML =
    '<th class="corner"><svg width="30" height="30" viewBox="0 0 30 30"><path d="M30 0V30H0Z" fill="#b1b1b1"/></svg></th>' +
    columns.map(([name]) => `<th${name === 'N' ? ' class="col-selected"' : ''}>${name}</th>`).join('');

let html = '';
for (let row = firstRow; row <= lastRow; row++) {
    const values = data[row - firstRow] || [];
    html += `<tr><th>${row}</th>` + columns.map((c, i) => `<td>${values[i] || ''}</td>`).join('') + '</tr>';
}
document.getElementById('rows').innerHTML = html;
```
